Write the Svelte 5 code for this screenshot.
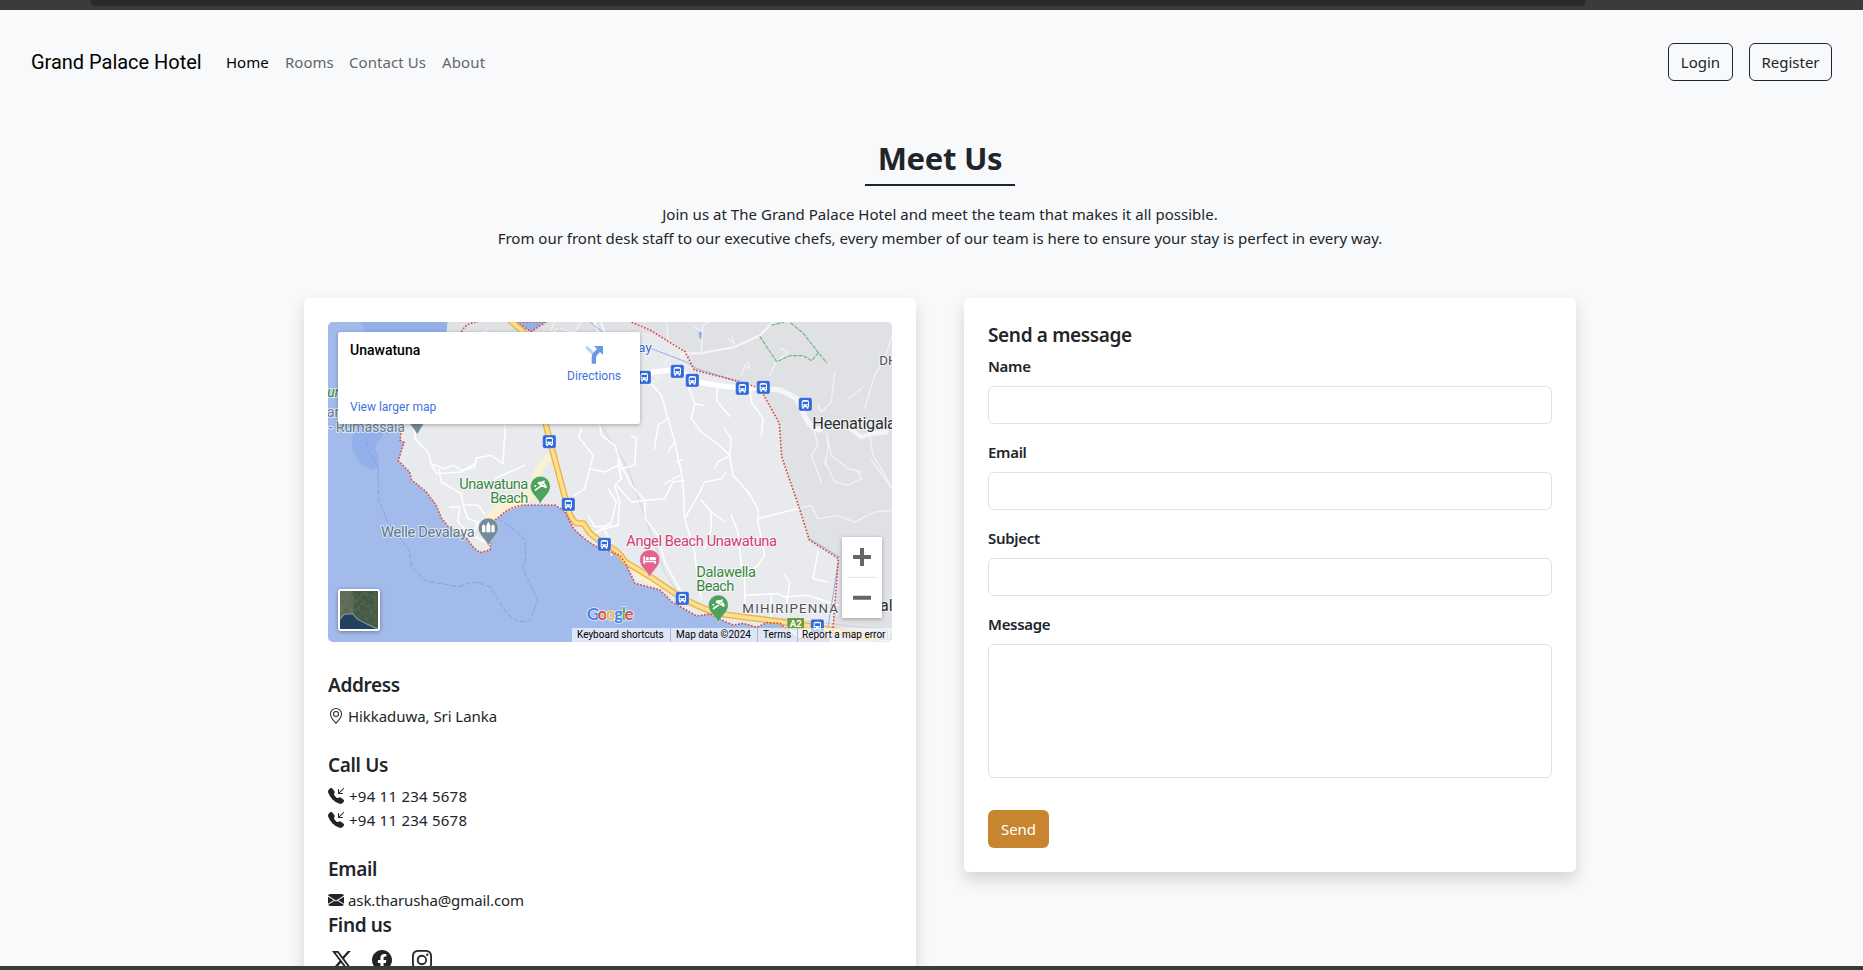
<script>
  const nav = ['Home', 'Rooms', 'Contact Us', 'About'];
  const fields = ['Name', 'Email', 'Subject'];

  // Map geometry uses three units per pixel (1692 x 960).
  const coast =
    'M219 334L216 354L228 362L219 389L211 416L236 442L244 449L251 474L294 509L324 549L341 589L361 614L416 649L436 676L456 692L486 684L488 664L476 639L501 594L536 566Q560 552 586 549L681 549L711 569L736 619Q770 655 806 674L876 700L893 725L921 784L996 804L1031 839L1106 882L1146 876L1191 899L1216 909L1246 904L1286 916L1316 902L1356 904L1380 925L1406 949L1506 949';
  const border =
    'M911 1L966 24L1071 89L1099 144L1236 179L1296 199L1354 304L1361 404L1416 564L1444 654L1531 709L1513 949';
  const highway =
    'M545 -6L586 30L640 240L654 310L681 414L721 564Q732 596 746 604L766 604L786 634L828 667Q868 680 891 719L966 764L1056 824Q1100 850 1166 874L1236 884L1356 899L1456 914L1536 929L1700 960';
  const streets = [
    'M256 302L262 350L300 390L310 425L350 440L375 430L400 445L440 435L445 408L490 400L525 425L528 375L532 310',
    'M310 425L325 455L400 450L440 425', 'M332 440L340 480L400 515L405 548L450 550L470 575',
    'M365 555L395 555L390 600L430 640', 'M405 548L420 590L450 600L435 640L470 660', 'M500 470L545 450L590 430',
    'M760 320L752 345L795 400L785 440L770 500L740 520', 'M785 440L830 450L870 430L880 470', 'M815 310L820 340L860 370L880 430L910 490L950 535L952 590L990 640L1010 720L1060 810',
    'M800 635L850 600L865 540L840 500', 'M830 625L850 660L850 700', 'M780 580L800 615L850 610',
    'M800 0L825 70L830 130', 'M818 0L830 30L800 60',
    'M965 180L1000 220L1020 290L1040 360L1060 450L1066 500L1070 590L1100 690L1110 780L1120 830',
    'M1020 290L990 310L980 380', 'M1040 360L1020 390', 'M1046 420L1064 412',
    'M1080 190L1100 245L1090 290L1120 330L1175 370L1205 400L1215 460L1260 510L1290 560L1290 600L1310 700L1290 730L1250 760L1250 850',
    'M1100 245L1125 250', 'M1170 190L1165 235L1205 283', 'M1205 400L1170 420L1160 440', 'M1265 190L1270 240L1305 290L1300 340',
    'M1205 400L1210 350L1190 320', 'M866 490L910 540L955 535L1010 530L1035 480L1070 475', 'M870 414L880 470L860 490L875 540L870 610L815 625',
    'M910 340L925 350L920 430L880 440', 'M1056 460L1010 485', 'M1070 590L1110 520L1130 480L1180 470L1195 450', 'M1120 535L1150 570L1190 600',
    'M1150 570L1150 620L1130 680', 'M1290 590L1330 580L1416 558',
    'M1210 580L1230 630L1240 730', 'M1250 820L1350 815L1370 825L1440 820L1530 850', 'M1470 690L1455 770L1500 780', 'M1370 760L1385 780L1375 850', 'M1330 815L1330 890'
  ];
  const hillStreets = [
    'M1416 558L1450 550L1470 590L1530 580L1580 600L1640 570L1692 565',
    'M1015 0L1020 50L1060 85L1060 120', 'M1120 92L1125 10L1150 -5', 'M1125 30L1100 15', 'M1200 50L1220 65L1210 40',
    'M1240 160L1250 130L1265 140L1260 120', 'M1325 160L1345 120L1380 90L1360 80', 'M1425 260L1460 330L1470 370L1450 400L1480 480', 'M1500 350L1510 400L1560 440L1600 450',
    'M1520 150L1510 240L1480 270L1470 250', 'M1560 230L1600 200', 'M1692 40L1670 110L1640 160L1610 260', 'M1625 340L1635 400L1660 440L1692 500', 'M1496 330L1500 380L1490 430',
    'M1490 414L1520 480L1560 490L1600 470L1590 450M1630 414L1692 500',
    'M960 190L990 170L1030 90', 'M440 50L480 20', 'M660 40L690 20M670 25L680 0', 'M700 20L740 30L760 0'
  ];
  const stops = [[949, 166], [1048, 148], [1093, 175], [1243, 199], [1306, 196], [1432, 247], [664, 359], [721, 547], [829, 667], [1063, 829], [1468, 912]];

  const icons = {
    geo: 'M12.166 8.94c-.524 1.062-1.234 2.12-1.96 3.07A32 32 0 0 1 8 14.58a32 32 0 0 1-2.206-2.57c-.726-.95-1.436-2.008-1.96-3.07C3.304 7.867 3 6.862 3 6a5 5 0 0 1 10 0c0 .862-.305 1.867-.834 2.94M8 16s6-5.686 6-10A6 6 0 0 0 2 6c0 4.314 6 10 6 10M8 8a2 2 0 1 1 0-4 2 2 0 0 1 0 4m0 1a3 3 0 1 0 0-6 3 3 0 0 0 0 6',
    phone: 'M1.885.511a1.745 1.745 0 0 1 2.61.163L6.29 2.98c.329.423.445.974.315 1.494l-.547 2.19a.68.68 0 0 0 .178.643l2.457 2.457a.68.68 0 0 0 .644.178l2.189-.547a1.75 1.75 0 0 1 1.494.315l2.306 1.794c.829.645.905 1.87.163 2.611l-1.034 1.034c-.74.74-1.846 1.065-2.877.702a18.6 18.6 0 0 1-7.01-4.42 18.6 18.6 0 0 1-4.42-7.009c-.362-1.03-.037-2.137.703-2.877zM15.854.146a.5.5 0 0 1 0 .708L11.707 5H14.5a.5.5 0 0 1 0 1h-4a.5.5 0 0 1-.5-.5v-4a.5.5 0 0 1 1 0v2.793L15.146.146a.5.5 0 0 1 .708 0',
    mail: 'M.05 3.555A2 2 0 0 1 2 2h12a2 2 0 0 1 1.95 1.555L8 8.414zM0 4.697v7.104l5.803-3.558zM6.761 8.83l-6.57 4.027A2 2 0 0 0 2 14h12a2 2 0 0 0 1.808-1.144l-6.57-4.027L8 9.586zm3.436-.586L16 11.801V4.697z',
    x: 'M12.6.75h2.454l-5.36 6.142L16 15.25h-4.937l-3.867-5.07-4.425 5.07H.316l5.733-6.57L0 .75h5.063l3.495 4.633L12.601.75Zm-.86 13.028h1.36L4.323 2.145H2.865z',
    facebook: 'M16 8.049c0-4.446-3.582-8.05-8-8.05C3.58 0-.002 3.603-.002 8.05c0 4.017 2.926 7.347 6.75 7.951v-5.625h-2.03V8.05H6.75V6.275c0-2.017 1.195-3.131 3.022-3.131.876 0 1.791.157 1.791.157v1.98h-1.009c-.993 0-1.303.621-1.303 1.258v1.51h2.218l-.354 2.326H9.25V16c3.824-.604 6.75-3.934 6.75-7.951',
    instagram: 'M8 0C5.829 0 5.556.01 4.703.048 3.85.088 3.269.222 2.76.42a3.9 3.9 0 0 0-1.417.923A3.9 3.9 0 0 0 .42 2.76C.222 3.268.087 3.85.048 4.7.01 5.555 0 5.827 0 8.001c0 2.172.01 2.444.048 3.297.04.852.174 1.433.372 1.942.205.526.478.972.923 1.417.444.445.89.719 1.416.923.51.198 1.09.333 1.942.372C5.555 15.99 5.827 16 8 16s2.444-.01 3.298-.048c.851-.04 1.434-.174 1.943-.372a3.9 3.9 0 0 0 1.416-.923c.445-.445.718-.891.923-1.417.197-.509.332-1.09.372-1.942C15.99 10.445 16 10.173 16 8s-.01-2.445-.048-3.299c-.04-.851-.175-1.433-.372-1.941a3.9 3.9 0 0 0-.923-1.417A3.9 3.9 0 0 0 13.24.42c-.51-.198-1.092-.333-1.943-.372C10.443.01 10.172 0 7.998 0zm-.717 1.442h.718c2.136 0 2.389.007 3.232.046.78.035 1.204.166 1.486.275.373.145.64.319.92.599s.453.546.598.92c.11.281.24.705.275 1.485.039.843.047 1.096.047 3.231s-.008 2.389-.047 3.232c-.035.78-.166 1.203-.275 1.485a2.5 2.5 0 0 1-.599.919c-.28.28-.546.453-.92.598-.28.11-.704.24-1.485.276-.843.038-1.096.047-3.232.047s-2.39-.009-3.233-.047c-.78-.036-1.203-.166-1.485-.276a2.5 2.5 0 0 1-.92-.598 2.5 2.5 0 0 1-.6-.92c-.109-.281-.24-.705-.275-1.485-.038-.843-.046-1.096-.046-3.233s.008-2.388.046-3.231c.036-.78.166-1.204.276-1.486.145-.373.319-.64.599-.92s.546-.453.92-.598c.282-.11.705-.24 1.485-.276.738-.034 1.024-.044 2.515-.045zm4.988 1.328a.96.96 0 1 0 0 1.92.96.96 0 0 0 0-1.92m-4.27 1.122a4.109 4.109 0 1 0 0 8.217 4.109 4.109 0 0 0 0-8.217m0 1.441a2.667 2.667 0 1 1 0 5.334 2.667 2.667 0 0 1 0-5.334'
  };
</script>

{#snippet icon(d, size)}
  <svg class="icon" width={size} height={size} viewBox="0 0 16 16" fill="currentColor"><path {d} /></svg>
{/snippet}

{#snippet pin(x, y, color)}
  <path transform="translate({x} {y})" d="M0 0C-4 -22 -30 -32 -30 -56A30 30 0 0 1 30 -56C30 -32 4 -22 0 0Z" fill={color} stroke="#fff" stroke-opacity=".55" stroke-width="2" />
{/snippet}

{#snippet beach(x, y)}
  {@render pin(x, y, '#4fa25c')}
  <g transform="translate({x} {y - 56})" fill="none" stroke="#fff" stroke-width="5"><circle cx="-15" cy="-1" r="3" fill="#fff" stroke="none" /><path d="M-7 -10Q10 -18 18 4M-7 -10L18 4M-16 12L7 -5M-2 -7L13 -16" /></g>
{/snippet}

<div class="screen">
  <div class="chrome-top"><div class="address-bar"></div></div>
  <div class="page">
    <header>
      <span class="brand">Grand Palace Hotel</span>
      <nav>
        {#each nav as item, i}<span class="link{i}" class:active={i === 0}>{item}</span>{/each}
      </nav>
      <button class="outline login">Login</button>
      <button class="outline register">Register</button>
    </header>

    <main>
      <h2>Meet Us</h2>
      <div class="rule"></div>
      <p class="intro"><span class="lead">Join us at The Grand Palace Hotel and meet the team that makes it all possible.</span><br />From our front desk staff to our executive chefs, every member of our team is here to ensure your stay is perfect in every way.</p>

      <div class="cards">
        <section class="card info">
          <div class="map">
            <svg class="canvas" width="564" height="320" viewBox="0 0 1692 960">
              <rect width="1692" height="960" fill="#e8eaed" />
              <path d="M911 0L966 24L1071 89L1099 144L1236 179L1296 199L1354 304L1361 404L1416 564L1444 654L1531 709L1513 960H1692V0Z" fill="#dfe1e5" />
              <path d="M358 0H911L966 24L980 32H350Z" fill="#dfe1e5" />
              <path d="{coast}L1506 960H0V0H358L350 80L230 300Z" fill="#a3bbeb" />
              <path d="M98 0H358L350 80L230 200L120 60Z" fill="#94b0ea" />
              <path d="M84 326L166 314L165 340L141 374L152 410L152 436L130 445L95 422L72 380L74 340Z" fill="#94b0ea" />
              <path d="M564 0H654L609 29Z" fill="#94b0ea" stroke="#d94f43" stroke-width="5" stroke-dasharray="5 5" />
              <path d="M1112 30L1125 26L1122 52L1114 48Z" fill="#94b0ea" />
              <path d="M470 592L500 550L545 540L600 500L620 440L660 390L672 410L640 450L632 520L590 548L536 566L501 594Z M893 725L960 760L1000 800L935 775Z" fill="#fbf1d0" />

              <g fill="none" stroke-linejoin="round" stroke-linecap="round">
                <path d="M820 310L900 440L960 610L1010 750L1060 830L1180 870L1692 925" stroke="#d0d3d7" stroke-width="3" />
                <g stroke="#fff" stroke-width="4.5">
                  {#each streets as d}<path {d} />{/each}
                </g>
                <g stroke="#f1f3f5" stroke-width="4">
                  {#each hillStreets as d}<path {d} />{/each}
                </g>
                <path d="M936 170L976 150L1048 142L1116 182L1196 194L1296 199" stroke="#fff" stroke-width="16" />
                <path d="M1296 199L1356 204L1406 229L1426 274Q1445 320 1476 324" stroke="#f3f5f7" stroke-width="16" />
                <path d="M1566 320L1600 345L1626 336L1676 330" stroke="#f3f5f7" stroke-width="13" />
                <path d="M1060 100L1071 94L1116 94L1216 76L1296 40L1336 0" stroke="#f3f5f7" stroke-width="7" />
                <path d="M786 0L830 35M965 78L1075 120L1106 140L1240 182M1444 650L1536 706M1531 720L1500 915" stroke="#94b0ea" stroke-width="3" />
                <path d="M116 360V380L150 432L152 534L181 604L244 684L251 734L291 776L391 794Q430 780 446 781L486 794L536 874L571 899L606 896L629 834L584 739L593 704L591 654L566 629L516 594" stroke="#83a1e6" stroke-width="3" stroke-dasharray="14 8" />
                <path d="M1296 44L1346 119L1386 101L1426 101L1451 116L1471 92L1496 122M1471 92L1426 34L1386 1M1331 9L1366 1" stroke="#71b784" stroke-width="3.5" stroke-dasharray="10 6" />
                <path d={highway} stroke="#efb23f" stroke-width="19" />
                <path d={highway} stroke="#fbdf93" stroke-width="11" />
              </g>
              <g fill="none" stroke="#d94f43" stroke-width="5" stroke-dasharray="5 5">
                <path d={coast} /><path d={border} /><path d="M400 30Q415 0 450 0" />
              </g>

              {#each stops as [x, y]}
                <g transform="translate({x} {y})">
                  <rect x="-20" y="-20" width="40" height="40" rx="6" fill="#2f69dc" stroke="#e9edf5" stroke-opacity=".5" stroke-width="2" />
                  <path d="M-11 9V-8Q-11 -13 -5 -13H5Q11 -13 11 -8V9H9V13H4V9H-4V13H-9V9Z" fill="#fff" />
                  <path d="M-8 -8H8V0H-8Z M-8 3h4v3h-4z M4 3h4v3h-4z" fill="#2f69dc" />
                </g>
              {/each}

              <path d="M247 306L286 306L268 336Z" fill="#768b99" />
              {@render beach(637, 549)}
              {@render pin(481, 674, '#768b99')}
              <path transform="translate(481 616)" d="M-19 15V-4L-14 -9L-9 -4V15ZM-6 15V-6L0 -17L6 -6V15ZM9 15V-4L14 -9L19 -4V15Z" fill="#fff" />
              {@render pin(965, 769, '#e0668f')}
              <g transform="translate(965 713)"><path d="M-19 -10H-14V3H19V12H14V8H-14V12H-19ZM0 -8H14Q19 -8 19 -3V1H0Z" fill="#fff" /><circle cx="-7" cy="-3" r="5" fill="#fff" /></g>
              {@render beach(1171, 905)}

              <g class="labels">
                <text x="-2" y="226" fill="#38873f" font-style="italic" font-size="42">ur</text>
                <text x="-4" y="286" fill="#68808f" font-size="43">ar</text>
                <text x="2" y="331" fill="#68808f" font-size="43" textLength="229">- Rumassala</text>
                <text x="394" y="502" fill="#38873f" font-size="44" textLength="207">Unawatuna</text>
                <text x="487" y="544" fill="#38873f" font-size="44" textLength="114">Beach</text>
                <text x="159" y="645" fill="#607888" font-size="44" textLength="281">Welle Devalaya</text>
                <text x="895" y="672" fill="#d23b70" font-size="44" textLength="452">Angel Beach Unawatuna</text>
                <text x="1105" y="765" fill="#38873f" font-size="44" textLength="179">Dalawella</text>
                <text x="1105" y="807" fill="#38873f" font-size="44" textLength="114">Beach</text>
                <text x="1243" y="872" fill="#4d5156" font-size="40" textLength="287">MIHIRIPENNA</text>
                <text x="1453" y="320" fill="#2c2f33" font-size="49" textLength="251">Heenatigala</text>
                <text x="1654" y="130" fill="#4d5156" font-size="40">D</text><text x="1680" y="130" fill="#4d5156" font-size="40">H</text>
                <text x="930" y="89" fill="#3972d5" font-size="41">ay</text>
                <text x="1656" y="868" fill="#2c2f33" font-size="48">alp</text>
                <text x="1630" y="954" fill="#7898d8" font-size="40">Taln</text>
              </g>
              <rect x="1378" y="888" width="50" height="34" fill="#6b9c43" />
              <text x="1385" y="916" font-size="29" font-weight="700" fill="#fff">A2</text>
              <text class="google" x="776" y="894" font-size="51" textLength="141"><tspan fill="#4b7fe8">G</tspan><tspan fill="#dc5145">o</tspan><tspan fill="#edb83c">o</tspan><tspan fill="#4b7fe8">g</tspan><tspan fill="#55a967">l</tspan><tspan fill="#dc5145">e</tspan></text>
            </svg>

            <div class="popup">
              <div class="place"><strong>Unawatuna</strong><span>View larger map</span></div>
              <div class="directions">
                <svg width="20" height="20" viewBox="0 0 60 60"><path d="M3 8L10 2L32 23L25 31Z" fill="#bdd1f1" /><path d="M23 56V37Q23 26 31 20L39 12L30 3H57V30L48 21L40 29Q36 33 36 39V56Z" fill="#6999e0" /></svg>
                <span>Directions</span>
              </div>
            </div>
            <div class="thumb">
              <svg width="38" height="38" viewBox="0 0 114 114">
                <defs><filter id="grain"><feTurbulence type="fractalNoise" baseFrequency=".08" numOctaves="3" /><feColorMatrix values="0 0 0 0 .1  0 0 0 0 .16  0 0 0 0 .1  1.6 0 0 0 -.55" /></filter></defs>
                <rect width="114" height="114" fill="#42563f" /><rect width="114" height="114" filter="url(#grain)" />
                <path d="M0 0H38L42 66L20 70L0 84Z" fill="#8b8a78" opacity=".35" />
                <path d="M0 84L12 70L38 68L52 84L80 99L114 114H0Z" fill="#23405f" /><path d="M0 84L12 70L38 68L52 84L80 99L112 113" fill="none" stroke="#7397a0" stroke-width="4" />
              </svg>
            </div>
            <div class="zoom">
              <svg width="40" height="81" viewBox="0 0 120 243"><path d="M33 60H87M60 33V87M33 182H87" stroke="#666" stroke-width="12" /><path d="M15 121H105" stroke="#e6e6e6" stroke-width="3" /></svg>
            </div>
            <div class="credits"><span class="c1">Keyboard shortcuts</span><span class="c2">Map data ©2024</span><span class="c3">Terms</span><span class="c4">Report a map error</span></div>
          </div>

          <div class="block"><h5>Address</h5><div class="row place-row">{@render icon(icons.geo, 16)}<span>Hikkaduwa, Sri Lanka</span></div></div>
          <div class="block"><h5>Call Us</h5><div class="row phone">{@render icon(icons.phone, 16)}<span>+94 11 234 5678</span></div><div class="row phone">{@render icon(icons.phone, 16)}<span>+94 11 234 5678</span></div></div>
          <div class="block mail"><h5>Email</h5><div class="row mail-row">{@render icon(icons.mail, 16)}<span>ask.tharusha@gmail.com</span></div></div>
          <h5>Find us</h5>
          <div class="social">{@render icon(icons.x, 20)}{@render icon(icons.facebook, 20)}{@render icon(icons.instagram, 20)}</div>
        </section>

        <section class="card form">
          <h5 class="send-title">Send a message</h5>
          {#each fields as field}<label><span>{field}</span><input type="text" /></label>{/each}
          <label class="message"><span>Message</span><textarea></textarea></label>
          <button class="send">Send</button>
        </section>
      </div>
    </main>
  </div>
  <div class="chrome-bottom"></div>
</div>

<style>
  :global(body) { margin: 0; overflow: hidden; }
  * { box-sizing: border-box; }
  .screen { width: 1863px; height: 970px; overflow: hidden; display: flex; flex-direction: column; font: 15px/24px 'Noto Sans', sans-serif; color: #212529; background: #f8f9fb; }
  .chrome-top { flex: none; height: 10px; background: #3b3b3b; padding: 0 277px 0 90px; }
  .address-bar { height: 6px; background: #292929; border-radius: 0 0 12px 12px; }
  .chrome-bottom { flex: none; height: 4px; background: #3b3b3c; }
  .page { flex: 1; min-height: 0; overflow: hidden; }

  header { height: 104px; padding: 0 31px; display: flex; align-items: center; }
  .brand { font: 20px/30px Roboto, sans-serif; color: #000; width: 171px; margin-right: 24px; white-space: nowrap; letter-spacing: -.02px; }
  nav { display: flex; flex: 1; gap: 16px; color: #646668; }
  nav span { white-space: nowrap; }
  nav .active { color: #000; }
  .link0 { width: 43px; }
  .link1 { width: 48px; }
  .link2 { width: 77px; letter-spacing: .07px; }
  .link3 { letter-spacing: .15px; }
  button { font: inherit; height: 38px; border-radius: 6px; padding: 0; }
  .outline { border: 1px solid #212529; background: transparent; color: #212529; }
  .login { width: 65px; margin-right: 16px; }
  .register { width: 83px; }

  main { width: 1320px; margin-left: 280px; padding: 24px 24px 0; }
  h2 { margin: 0; height: 46px; font-size: 31px; line-height: 40px; font-weight: 700; text-align: center; letter-spacing: -.3px; }
  .rule { width: 150px; height: 2px; background: #212529; margin: 0 auto 16px; }
  .intro { margin: 0 0 48px; text-align: center; white-space: nowrap; }
  .lead { letter-spacing: .03px; }
  .cards { display: flex; align-items: flex-start; gap: 48px; }
  .card { width: 612px; padding: 24px; background: #fff; border-radius: 5px; box-shadow: 0 8px 16px rgba(0, 0, 0, .15); }
  .info { height: 800px; }
  h5 { margin: 0 0 8px; padding-top: 1px; height: 24px; font-size: 19px; line-height: 24px; font-weight: 600; letter-spacing: -.35px; }

  .map { position: relative; width: 564px; height: 320px; margin-bottom: 30px; border-radius: 5px; overflow: hidden; font-family: Roboto, sans-serif; }
  .canvas { display: block; font-family: Roboto, sans-serif; }
  .labels text { paint-order: stroke; stroke: #fff; stroke-opacity: .65; stroke-width: 6px; stroke-linejoin: round; }
  .google { font-family: Lato, sans-serif; font-weight: 700; paint-order: stroke; stroke: #fff; stroke-opacity: .7; stroke-width: 5px; }
  .popup { position: absolute; left: 10px; top: 10px; width: 302px; height: 92px; padding: 9px 19px 9px 12px; display: flex; justify-content: space-between; background: #fff; border-radius: 2px; box-shadow: 0 1px 4px rgba(0, 0, 0, .3); font-size: 12px; line-height: 16px; color: #3f73dc; }
  .place { display: flex; flex-direction: column; justify-content: space-between; }
  .place strong { font-size: 14px; line-height: 18px; font-weight: 500; color: #000; }
  .directions { display: flex; flex-direction: column; align-items: center; padding-top: 4px; gap: 3px; }
  .thumb { position: absolute; left: 10px; top: 267px; width: 42px; height: 42px; border: 2px solid #fff; border-radius: 3px; box-shadow: 0 1px 4px rgba(0, 0, 0, .35); overflow: hidden; }
  .thumb svg, .zoom svg { display: block; }
  .zoom { position: absolute; left: 514px; top: 215px; width: 40px; height: 81px; background: #fff; border-radius: 1px; box-shadow: 0 1px 4px rgba(0, 0, 0, .3); }
  .credits { position: absolute; left: 244px; bottom: 0; width: 320px; height: 14px; display: flex; background: rgba(245, 246, 250, .72); font-size: 10px; line-height: 14px; color: #000; white-space: nowrap; }
  .credits span { padding-left: 5px; border-right: 1px solid #a6b8df; }
  .credits .c1 { width: 99px; }
  .credits .c2 { width: 87px; }
  .credits .c3 { width: 40px; }
  .credits .c4 { border: 0; padding-left: 4px; }

  .block { margin-bottom: 24px; }
  .block.mail { margin-bottom: 0; }
  .row { display: flex; align-items: center; gap: 4px; height: 24px; white-space: nowrap; }
  .place-row { letter-spacing: -.06px; }
  .phone { gap: 5px; letter-spacing: .24px; }
  .mail-row { letter-spacing: -.11px; }
  .icon { flex: none; display: block; }
  .social { display: flex; gap: 20px; padding: 6px 0 0 4px; }

  label { display: block; margin-bottom: 16px; font-weight: 600; letter-spacing: -.3px; }
  label span { display: block; margin-bottom: 8px; }
  input, textarea { display: block; width: 100%; height: 38px; border: 1px solid #dee2e6; border-radius: 6px; background: #fff; resize: none; outline: none; }
  textarea { height: 134px; }
  .message { margin-bottom: 32px; }
  .send { display: block; width: 61px; border: 0; background: #c88530; color: #fff; }
</style>
